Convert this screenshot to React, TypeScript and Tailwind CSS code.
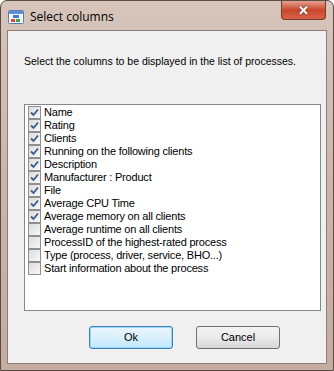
import { useState } from "react";

const COLUMNS = [
  { label: "Name", checked: true },
  { label: "Rating", checked: true },
  { label: "Clients", checked: true },
  { label: "Running on the following clients", checked: true },
  { label: "Description", checked: true },
  { label: "Manufacturer : Product", checked: true },
  { label: "File", checked: true },
  { label: "Average CPU Time", checked: true },
  { label: "Average memory on all clients", checked: true },
  { label: "Average runtime on all clients", checked: false },
  { label: "ProcessID of the highest-rated process", checked: false },
  { label: "Type (process, driver, service, BHO...)", checked: false },
  { label: "Start information about the process", checked: false },
];

const CheckBox = ({ checked }: { checked: boolean }) => (
  <span className="flex h-[13px] w-[13px] shrink-0 items-center justify-center border border-[#8f8f8f] bg-gradient-to-br from-[#dcdcdc] to-[#f8f8f8]">
    {checked && (
      <svg width="9" height="9" viewBox="0 0 9 9">
        <path d="M1 4.5 L3.5 7 L8 1.5" fill="none" stroke="#3c5a8c" strokeWidth="1.8" />
      </svg>
    )}
  </span>
);

const AppIcon = () => (
  <svg width="16" height="16" viewBox="0 0 16 16">
    <rect x="0.5" y="1.5" width="15" height="13" rx="1" fill="#f4f7fb" stroke="#5b7fb5" />
    <rect x="1" y="2" width="14" height="3" fill="#5f8fd2" />
    <rect x="5" y="6" width="6" height="3" fill="#3d7bd0" />
    <rect x="3" y="10" width="4" height="3" fill="#e04a3a" />
    <rect x="8" y="10" width="4" height="3" fill="#3ea64a" />
  </svg>
);

export default function App() {
  const [items, setItems] = useState(COLUMNS);

  const toggle = (i: number) =>
    setItems((prev) => prev.map((c, j) => (j === i ? { ...c, checked: !c.checked } : c)));

  return (
    <div
      className="flex h-[371px] w-[334px] flex-col overflow-hidden rounded-t-[7px] border border-[#5a4a44] bg-gradient-to-b from-[#d7c5bb] via-[#cbb5a8] to-[#c4ada0]"
      style={{ fontFamily: '"Liberation Sans", Arial, sans-serif' }}
    >
      {/* Title bar */}
      <div className="flex h-[29px] shrink-0 items-start">
        <div className="flex items-center gap-[6px] pl-[7px] pt-[7px]">
          <AppIcon />
          <span className="text-[12px] text-black" style={{ fontFamily: '"Open Sans", "Noto Sans", sans-serif' }}>
            Select columns
          </span>
        </div>
        <div className="ml-auto mr-[7px] flex h-[19px] w-[45px] items-center justify-center rounded-b-[4px] border border-t-0 border-[#7a3a2c] bg-gradient-to-b from-[#e4a08e] via-[#c9452c] to-[#d8624a]">
          <span className="text-[13px] font-bold leading-none text-white [text-shadow:0_0_2px_#333]">✕</span>
        </div>
      </div>

      {/* Client area */}
      <div className="mx-[6px] mb-[6px] flex flex-1 flex-col border border-[#8a7f7a] bg-[#f0f0f0] text-[10.5px] text-black">
        <p className="pl-[16px] pt-[23px]">Select the columns to be displayed in the list of processes.</p>

        <div className="ml-[16px] mr-[5px] mt-[34px] h-[207px] border border-[#828790] bg-white pl-[3px] pt-[1px]">
          {items.map((c, i) => (
            <label key={c.label} className="flex h-[13px] cursor-default items-center gap-[3px]" onClick={() => toggle(i)}>
              <CheckBox checked={c.checked} />
              <span className="whitespace-nowrap text-[11px] leading-none tracking-[-0.2px]">{c.label}</span>
            </label>
          ))}
        </div>

        <div className="mt-[15px] flex gap-[23px] pl-[81px]">
          <button className="h-[23px] w-[84px] rounded-[3px] border border-[#3c7fb1] bg-gradient-to-b from-[#eaf6fd] via-[#d9f0fc] to-[#bee6fd] text-[11px] shadow-[inset_0_0_0_1px_#9fd7f5]">
            Ok
          </button>
          <button className="h-[23px] w-[84px] rounded-[3px] border border-[#707070] bg-gradient-to-b from-[#f2f2f2] via-[#ebebeb] to-[#d6d6d6] text-[11px]">
            Cancel
          </button>
        </div>
      </div>
    </div>
  );
}
